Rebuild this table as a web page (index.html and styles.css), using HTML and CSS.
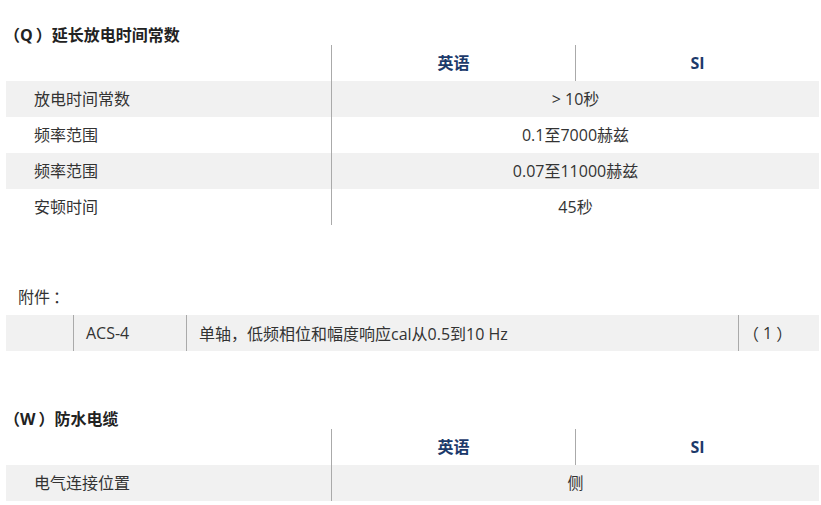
FILE: index.html
```html
<!DOCTYPE html>
<html lang="zh-CN">
<head>
<meta charset="utf-8">
<link rel="stylesheet" href="styles.css">
</head>
<body>
<div class="page">
  <h3 class="title title-first">（<span class="pin">Q</span>）延长放电时间常数</h3>
  <div class="spec">
    <div class="cell head label"></div>
    <div class="cell head col-en">英语</div>
    <div class="cell head col-si">SI</div>

    <div class="cell label shade">放电时间常数</div>
    <div class="cell value shade">&gt; 10秒</div>

    <div class="cell label">频率范围</div>
    <div class="cell value">0.1至7000赫兹</div>

    <div class="cell label shade">频率范围</div>
    <div class="cell value shade">0.07至11000赫兹</div>

    <div class="cell label">安顿时间</div>
    <div class="cell value">45秒</div>
  </div>

  <p class="note">附件<span class="colon">：</span></p>
  <div class="acc">
    <div class="acell a1"></div>
    <div class="acell a2">ACS-4</div>
    <div class="acell a3">单轴，低频相位和幅度响应cal从0.5到10 Hz</div>
    <div class="acell a4">（<span class="qty">1</span>）</div>
  </div>

  <h3 class="title title-second">（<span class="pin">W</span>）防水电缆</h3>
  <div class="spec">
    <div class="cell head label"></div>
    <div class="cell head col-en">英语</div>
    <div class="cell head col-si">SI</div>

    <div class="cell label shade">电气连接位置</div>
    <div class="cell value shade">侧</div>
  </div>
</div>
</body>
</html>
```

FILE: styles.css
```css
html, body {
  margin: 0;
  padding: 0;
  background: #ffffff;
}

body {
  font-family: "Open Sans", "Noto Sans CJK SC", sans-serif;
  font-size: 16px;
  color: #333333;
}

.page {
  width: 813px;
  padding-left: 6px;
}

.title {
  margin: 0 0 0 -2px;
  height: 20px;
  line-height: 20px;
  font-size: 16px;
  font-weight: 700;
  color: #222222;
}

.pin {
  margin: 0 3px 0 0;
}

.title-first {
  margin-top: 25px;
}

.title-second {
  margin-top: 58px;
}

.spec {
  display: grid;
  grid-template-columns: 326px 244px 243px;
  grid-auto-rows: 36px;
}

.cell {
  display: flex;
  align-items: center;
  line-height: 20px;
}

.label {
  padding-left: 28px;
  border-right: 1px solid #aaaaaa;
}

.head {
  justify-content: center;
  font-weight: 700;
  color: #1c3a6b;
}

.head.label {
  padding-left: 0;
}

.col-en {
  border-right: 1px solid #aaaaaa;
}

.value {
  grid-column: span 2;
  justify-content: center;
}

.shade {
  background: #f1f1f1;
}

.note {
  margin: 62px 0 0 0;
  height: 20px;
  line-height: 20px;
  padding-left: 12px;
}

.colon {
  margin-left: 3px;
}

.acc {
  margin-top: 8px;
  display: grid;
  grid-template-columns: 68px 113px 552px 80px;
  height: 36px;
  background: #f1f1f1;
}

.acell {
  display: flex;
  align-items: center;
  padding-left: 12px;
  border-right: 1px solid #aaaaaa;
}

.a4 {
  border-right: none;
  padding-left: 4px;
}

.qty {
  margin: 0 4px;
}
```
